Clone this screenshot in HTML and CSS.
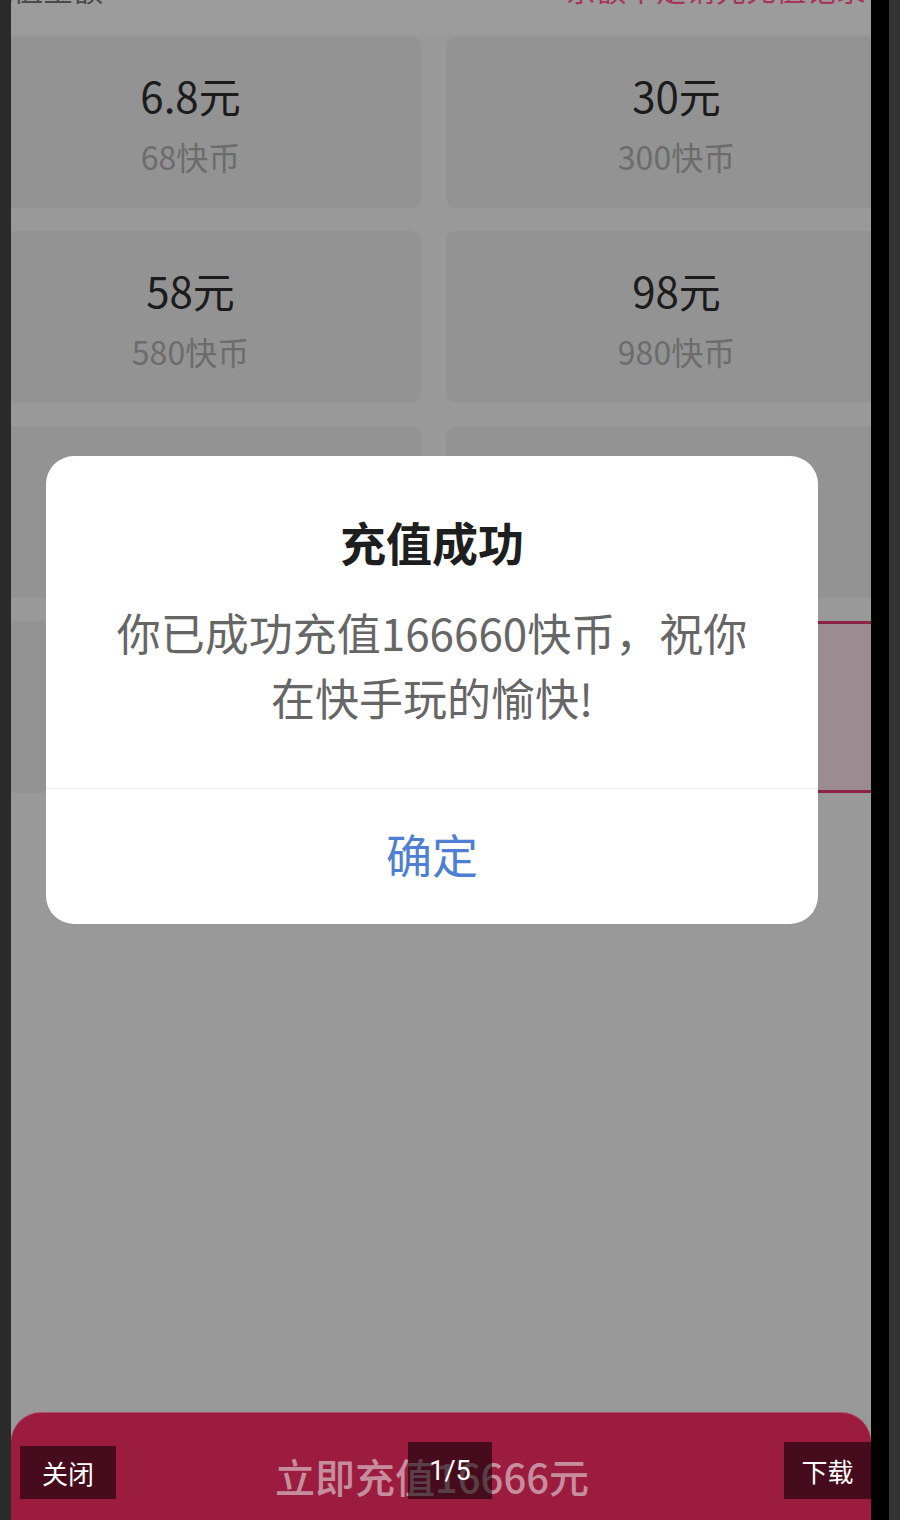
FILE: index.html
```html
<!DOCTYPE html>
<html lang="zh-CN">
<head>
<meta charset="utf-8">
<title>充值成功</title>
<link rel="stylesheet" href="styles.css">
</head>
<body>
<div class="frame">
  <div class="edge-left"></div>
  <div class="screen">
    <div class="head">
      <span class="head-title">充值金额</span>
      <span class="head-link">余额不足请先充值记录</span>
    </div>
    <div class="grid">
      <div class="card"><div class="price">6.8元</div><div class="coins">68快币</div></div>
      <div class="card"><div class="price">30元</div><div class="coins">300快币</div></div>
      <div class="card"><div class="price">58元</div><div class="coins">580快币</div></div>
      <div class="card"><div class="price">98元</div><div class="coins">980快币</div></div>
      <div class="card"></div>
      <div class="card"></div>
      <div class="card"></div>
      <div class="card selected"></div>
    </div>
    <div class="footer">立即充值16666元</div>

    <div class="dialog">
      <div class="dialog-body">
        <div class="dialog-title">充值成功</div>
        <div class="dialog-msg">你已成功充值166660快币，祝你在快手玩的愉快!</div>
      </div>
      <div class="dialog-btn">确定</div>
    </div>
  </div>
  <div class="edge-black"></div>
  <div class="edge-right"></div>

  <div class="toolbar">
    <div class="tool tool-close">关闭</div>
    <div class="tool tool-count">1/5</div>
    <div class="tool tool-down">下载</div>
  </div>
</div>
</body>
</html>
```

FILE: styles.css
```css
* { box-sizing: border-box; }
html, body { margin: 0; padding: 0; }
body {
  width: 900px;
  height: 1520px;
  overflow: hidden;
  background: #2b2b2b;
  font-family: "Noto Sans CJK SC", "Noto Sans", sans-serif;
}
.frame {
  position: relative;
  display: flex;
  width: 900px;
  height: 1520px;
}
.edge-left { width: 11px; background: #2a2a2a; flex: none; }
.edge-black { width: 18px; background: #000; flex: none; }
.edge-right { width: 11px; background: #333333; flex: none; }

.screen {
  position: relative;
  width: 860px;
  flex: none;
  height: 1520px;
  overflow: hidden;
  background: #999999;
  display: flex;
  flex-direction: column;
}

.head {
  height: 34px;
  background: #9c9c9c;
  display: flex;
  justify-content: space-between;
  align-items: flex-end;
  flex: none;
}
.head-title, .head-link {
  font-size: 30px;
  line-height: 40px;
  margin-bottom: 26px;
  white-space: nowrap;
}
.head-title { color: #4a4a4a; margin-left: -28px; }
.head-link { color: #a8355c; margin-right: 5px; }

.grid {
  margin-top: 2px;
  margin-left: -51px;
  display: grid;
  grid-template-columns: 461px 461px;
  grid-auto-rows: 172px;
  column-gap: 25px;
  row-gap: 23px;
  flex: none;
}
.card {
  background: #939393;
  border-radius: 10px;
  display: flex;
  flex-direction: column;
  align-items: center;
  padding-top: 33px;
}
.card.selected {
  background: #9a8c90;
  border-top: 3px solid #8e2444;
  border-bottom: 3px solid #8e2444;
  border-radius: 0;
}
.price {
  font-size: 42px;
  line-height: 52px;
  color: #1c1c1c;
}
.coins {
  font-size: 32px;
  line-height: 44px;
  margin-top: 13px;
  color: #6c6c6c;
}

.footer {
  margin-top: auto;
  height: 107px;
  flex: none;
  background: #9c1c40;
  border-radius: 30px 30px 0 0;
  box-shadow: 0 -1px 0 #b04a66;
  color: #c58d9d;
  font-size: 40px;
  font-weight: 500;
  line-height: 50px;
  padding: 38px 18px 0 0;
  text-align: center;
}

.dialog {
  position: absolute;
  left: 35px;
  top: 456px;
  width: 772px;
  height: 468px;
  background: #ffffff;
  border-radius: 28px;
  display: flex;
  flex-direction: column;
}
.dialog-body {
  padding: 55px 58px 58px;
  text-align: center;
  border-bottom: 1px solid #ececec;
}
.dialog-title {
  font-size: 46px;
  line-height: 60px;
  font-weight: 700;
  color: #1e1e1e;
}
.dialog-msg {
  margin-top: 29px;
  font-size: 44px;
  line-height: 65px;
  color: #666666;
}
.dialog-btn {
  flex: 1;
  display: flex;
  align-items: center;
  justify-content: center;
  font-size: 46px;
  color: #4e7fd3;
  padding-bottom: 8px;
}

.toolbar {
  position: absolute;
  left: 20px;
  top: 1442px;
  width: 851px;
  height: 57px;
  display: flex;
  justify-content: space-between;
  align-items: flex-end;
}
.tool {
  background: rgba(0, 0, 0, 0.55);
  color: #ffffff;
  font-size: 26px;
  display: flex;
  align-items: center;
  justify-content: center;
}
.tool-close { width: 96px; height: 53px; }
.tool-count { width: 84px; height: 57px; font-family: "Roboto", "Noto Sans", sans-serif; font-size: 27px; }
.tool-down { width: 87px; height: 57px; }
```
